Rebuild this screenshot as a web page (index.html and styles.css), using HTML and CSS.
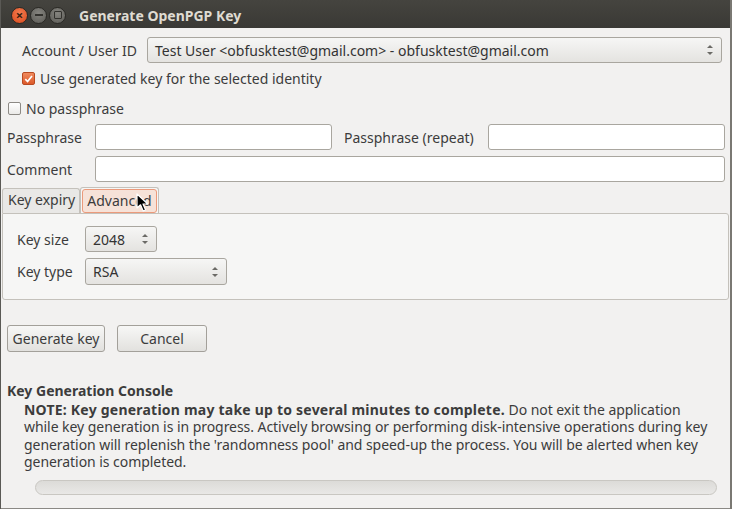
FILE: index.html
```html
<!DOCTYPE html>
<html lang="en">
<head>
    <meta charset="UTF-8">
    <title>Generate OpenPGP Key</title>
    <link rel="stylesheet" href="styles.css">
</head>
<body>
    <div class="window">
        <div class="titlebar">
            <div class="wm-buttons">
                <span class="wm-btn close">&#215;</span>
                <span class="wm-btn minimize"><i class="bar"></i></span>
                <span class="wm-btn maximize"><i class="box"></i></span>
            </div>
            <span class="title">Generate OpenPGP Key</span>
        </div>

        <div class="content">
            <div class="identity">
                <div class="row">
                    <label class="label account-label">Account / User ID</label>
                    <div class="combo wide">
                        <span>Test User &lt;obfusktest@gmail.com&gt; - obfusktest@gmail.com</span>
                        <span class="arrows"></span>
                    </div>
                </div>
                <div class="check-row">
                    <span class="checkbox checked">
                        <svg viewBox="0 0 12 12" width="12" height="12"><path d="M2.5 6.2 L5 8.8 L9.8 2.8" fill="none" stroke="#fff" stroke-width="1.8"/></svg>
                    </span>
                    <span>Use generated key for the selected identity</span>
                </div>
            </div>

            <div class="check-row nopass">
                <span class="checkbox"></span>
                <span>No passphrase</span>
            </div>

            <div class="row pass-row">
                <label class="label field-label">Passphrase</label>
                <div class="entry first"></div>
                <label class="label repeat-label">Passphrase (repeat)</label>
                <div class="entry"></div>
            </div>

            <div class="row comment-row">
                <label class="label field-label">Comment</label>
                <div class="entry"></div>
            </div>

            <div class="tabs">
                <div class="tab">Key expiry</div>
                <div class="tab active"><span class="hover">Advanced</span></div>
                <svg class="cursor" viewBox="0 0 13 20" width="13" height="20">
                    <path d="M1 1 L1 15 L4.5 11.8 L7.2 18 L9.6 17 L7 11 L11.8 11 Z" fill="#000" stroke="#fff" stroke-width="1.2" stroke-linejoin="round"/>
                </svg>
            </div>
            <div class="tab-panel">
                <div class="row">
                    <label class="label panel-label">Key size</label>
                    <div class="combo spin">
                        <span>2048</span>
                        <span class="arrows"></span>
                    </div>
                </div>
                <div class="row">
                    <label class="label panel-label">Key type</label>
                    <div class="combo type">
                        <span>RSA</span>
                        <span class="arrows"></span>
                    </div>
                </div>
            </div>

            <div class="actions">
                <button class="btn generate">Generate key</button>
                <button class="btn cancel">Cancel</button>
            </div>

            <div class="console">
                <h2>Key Generation Console</h2>
                <p><strong>NOTE: Key generation may take up to several minutes to complete.</strong> Do not exit the application while key generation is in progress. Actively browsing or performing disk-intensive operations during key generation will replenish the 'randomness pool' and speed-up the process. You will be alerted when key generation is completed.</p>
                <div class="progress"></div>
            </div>
        </div>
    </div>
</body>
</html>
```

FILE: styles.css
```css
:root {
    --bg: #f2f1f0;
    --text: #3c3c3c;
    --border: #b6b3ad;
    --orange: #e4643a;
}

* {
    box-sizing: border-box;
}

body {
    margin: 0;
    width: 732px;
    height: 509px;
    overflow: hidden;
    font-family: 'Noto Sans', 'DejaVu Sans', sans-serif;
    font-size: 14px;
    color: var(--text);
    background: #3c3b37;
}

.window {
    height: 509px;
    border-left: 1px solid #5a5955;
    border-right: 2px solid #7a7873;
    display: flex;
    flex-direction: column;
}

.titlebar {
    height: 28px;
    flex: none;
    background: linear-gradient(#45443f, #3a3935);
    display: flex;
    align-items: center;
    padding-left: 10px;
    padding-top: 2px;
}

.wm-buttons {
    display: flex;
    gap: 2px;
}

.wm-btn {
    width: 17px;
    height: 17px;
    border-radius: 50%;
    display: flex;
    align-items: center;
    justify-content: center;
    background: radial-gradient(circle at 50% 35%, #85847f, #5b5a55);
    border: 1px solid #2a2925;
    color: #3c3b37;
}

.wm-btn.close {
    background: radial-gradient(circle at 50% 35%, #f47c50, #d8491c);
    color: #3a2010;
    font-size: 13px;
    font-weight: bold;
    line-height: 1;
}

.wm-btn .bar {
    width: 8px;
    height: 2px;
    background: #33322e;
}

.wm-btn .box {
    width: 8px;
    height: 8px;
    border: 1.5px solid #33322e;
    border-radius: 1px;
}

.title {
    margin-left: 13px;
    color: #dfdbd2;
    font-weight: bold;
    font-size: 14px;
}

.content {
    flex: 1;
    background: var(--bg);
    border-bottom: 1px solid #8b8985;
    padding: 9px 5px 0 5px;
}

.row {
    display: flex;
    align-items: center;
}

.label {
    white-space: nowrap;
}

.identity {
    padding-left: 16px;
}

.account-label {
    width: 125px;
}

.combo {
    height: 26px;
    border: 1px solid #a9a69f;
    border-radius: 3px;
    background: linear-gradient(#f6f6f5, #e4e3e0);
    display: flex;
    align-items: center;
    justify-content: space-between;
    padding: 0 8px 0 7px;
    color: #333;
}

.combo.wide {
    flex: 1;
    margin-right: 3px;
}

.arrows {
    width: 6px;
    height: 10px;
    position: relative;
}

.arrows::before,
.arrows::after {
    content: "";
    position: absolute;
    left: 0;
    border-left: 3px solid transparent;
    border-right: 3px solid transparent;
}

.arrows::before {
    top: 0;
    border-bottom: 3px solid #6b6a66;
}

.arrows::after {
    bottom: 0;
    border-top: 3px solid #6b6a66;
}

.check-row {
    display: flex;
    align-items: center;
    gap: 5px;
    margin-top: 6px;
}

.checkbox {
    width: 13px;
    height: 13px;
    border: 1px solid #8d8a85;
    border-radius: 2px;
    background: linear-gradient(#fff, #ebeae8);
    display: flex;
    align-items: center;
    justify-content: center;
}

.checkbox.checked {
    background: linear-gradient(#f08a5d, #dc5a2b);
    border-color: #b84a22;
}

.nopass {
    margin-top: 11px;
    margin-left: 2px;
    margin-bottom: 6px;
}

.entry {
    height: 26px;
    flex: 1;
    background: #fff;
    border: 1px solid #a9a69f;
    border-radius: 3px;
}

.entry.first {
    flex: none;
    width: 237px;
}

.field-label {
    width: 89px;
    padding-left: 1px;
}

.repeat-label {
    width: 156px;
    padding-left: 12px;
}

.pass-row {
    margin-bottom: 6px;
}

.tabs {
    display: flex;
    align-items: flex-end;
    margin-top: 5px;
    margin-left: -4px;
    position: relative;
    height: 26px;
}

.tab {
    height: 25px;
    padding: 1px 4px 0 5px;
    border: 1px solid #c4c1bb;
    border-bottom: none;
    border-radius: 3px 3px 0 0;
    background: #e9e8e6;
}

.tab.active {
    height: 26px;
    background: #f6f6f5;
    padding: 1px;
}

.hover {
    display: block;
    height: 24px;
    padding: 1px 4px 0 4px;
    border: 1px solid #eb9a7b;
    border-radius: 3px;
    background: #f6e2d8;
}

.cursor {
    position: absolute;
    left: 134px;
    top: 6px;
}

.tab-panel {
    margin-left: -4px;
    margin-right: -4px;
    height: 87px;
    background: #f6f6f5;
    border: 1px solid #c4c1bb;
    border-radius: 0 3px 3px 3px;
    padding: 12px 14px;
    display: flex;
    flex-direction: column;
    gap: 6px;
}

.panel-label {
    width: 68px;
}

.spin {
    width: 72px;
    height: 26px;
}

.type {
    width: 142px;
    height: 27px;
}

.actions {
    display: flex;
    gap: 12px;
    margin-top: 25px;
    padding-left: 1px;
}

.btn {
    height: 27px;
    font: inherit;
    color: var(--text);
    border: 1px solid #a3a09a;
    border-radius: 3px;
    background: linear-gradient(#f7f7f6, #e2e1de);
    padding: 0 4px;
}

.btn.generate {
    width: 98px;
}

.btn.cancel {
    width: 90px;
}

.console {
    margin-top: 29px;
    padding-left: 1px;
}

.console h2 {
    font-size: 14px;
    margin: 0;
    font-weight: bold;
    line-height: 19px;
}

.console p {
    margin: 1px 8px 0 17px;
    line-height: 17.3px;
    letter-spacing: -0.05px;
}

.console strong {
    letter-spacing: 0.22px;
}

.progress {
    margin: 10px 8px 0 28px;
    height: 15px;
    border: 1px solid #c9c7c2;
    border-radius: 8px;
    background: linear-gradient(#dcdbd8, #e9e8e6);
}
```
